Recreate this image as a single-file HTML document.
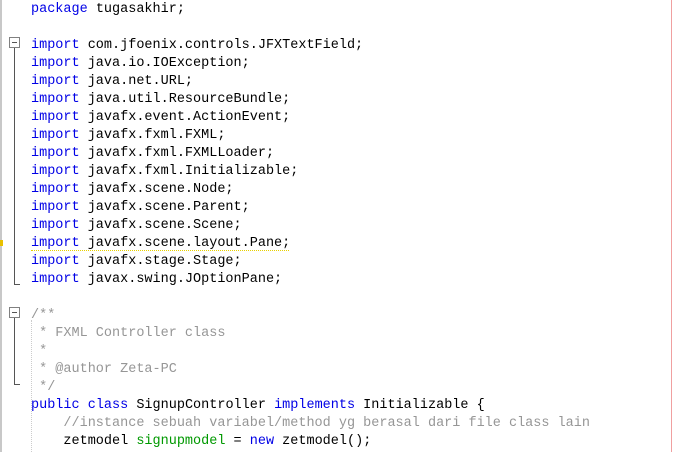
<!DOCTYPE html><html><head><style>
body{margin:0;width:674px;height:452px;background:#fff;overflow:hidden;position:relative;font-family:"Liberation Mono",monospace;font-size:13.5px}
.l{position:absolute;left:31px;height:18px;line-height:18px;white-space:pre;color:#000}
.k{color:#0000e6}.c{color:#969696}.g{color:#009900}
.box{position:absolute;left:9px;width:9px;height:9px;border:1px solid #808080;background:#fff}
.box:after{content:"";position:absolute;left:2px;top:4px;width:5px;height:1px;background:#555}
.vl{position:absolute;left:14px;width:1px;background:#555}
.hl{position:absolute;left:14px;width:6px;height:1px;background:#555}
</style></head><body>
<div style="position:absolute;left:0;top:0;width:2px;height:452px;background:#c8c8c8"></div>
<div style="position:absolute;left:671px;top:0;width:1px;height:452px;background:#f0a0a0"></div>
<div class="l" style="top:1px"><span class="k">package</span> tugasakhir;</div>
<div class="l" style="top:37px"><span class="k">import</span> com.jfoenix.controls.JFXTextField;</div>
<div class="l" style="top:55px"><span class="k">import</span> java.io.IOException;</div>
<div class="l" style="top:73px"><span class="k">import</span> java.net.URL;</div>
<div class="l" style="top:91px"><span class="k">import</span> java.util.ResourceBundle;</div>
<div class="l" style="top:109px"><span class="k">import</span> javafx.event.ActionEvent;</div>
<div class="l" style="top:127px"><span class="k">import</span> javafx.fxml.FXML;</div>
<div class="l" style="top:145px"><span class="k">import</span> javafx.fxml.FXMLLoader;</div>
<div class="l" style="top:163px"><span class="k">import</span> javafx.fxml.Initializable;</div>
<div class="l" style="top:181px"><span class="k">import</span> javafx.scene.Node;</div>
<div class="l" style="top:199px"><span class="k">import</span> javafx.scene.Parent;</div>
<div class="l" style="top:217px"><span class="k">import</span> javafx.scene.Scene;</div>
<div class="l" style="top:235px"><span class="k">import</span> javafx.scene.layout.Pane;</div>
<div style="position:absolute;left:31px;top:250px;width:258px;border-top:1px dotted #e8d000"></div>
<div style="position:absolute;left:0;top:240px;width:3px;height:6px;background:#e8c000"></div>
<div class="l" style="top:253px"><span class="k">import</span> javafx.stage.Stage;</div>
<div class="l" style="top:271px"><span class="k">import</span> javax.swing.JOptionPane;</div>
<div class="l c" style="top:307px">/**</div>
<div class="l c" style="top:325px"> * FXML Controller class</div>
<div class="l c" style="top:343px"> *</div>
<div class="l c" style="top:361px"> * @author Zeta-PC</div>
<div class="l c" style="top:379px"> */</div>
<div class="l" style="top:397px"><span class="k">public</span> <span class="k">class</span> SignupController <span class="k">implements</span> Initializable {</div>
<div class="l c" style="top:415px">    //instance sebuah variabel/method yg berasal dari file class lain</div>
<div class="l" style="top:433px">    zetmodel <span class="g">signupmodel</span> = <span class="k">new</span> zetmodel();</div>
<div style="position:absolute;left:31px;top:320px;height:132px;border-left:1px dotted #ccc"></div>
<div class="vl" style="top:48px;height:236px"></div><div class="hl" style="top:284px"></div>
<div class="box" style="top:37px"></div>
<div class="vl" style="top:318px;height:66px"></div><div class="hl" style="top:384px"></div>
<div class="box" style="top:307px"></div>
</body></html>
